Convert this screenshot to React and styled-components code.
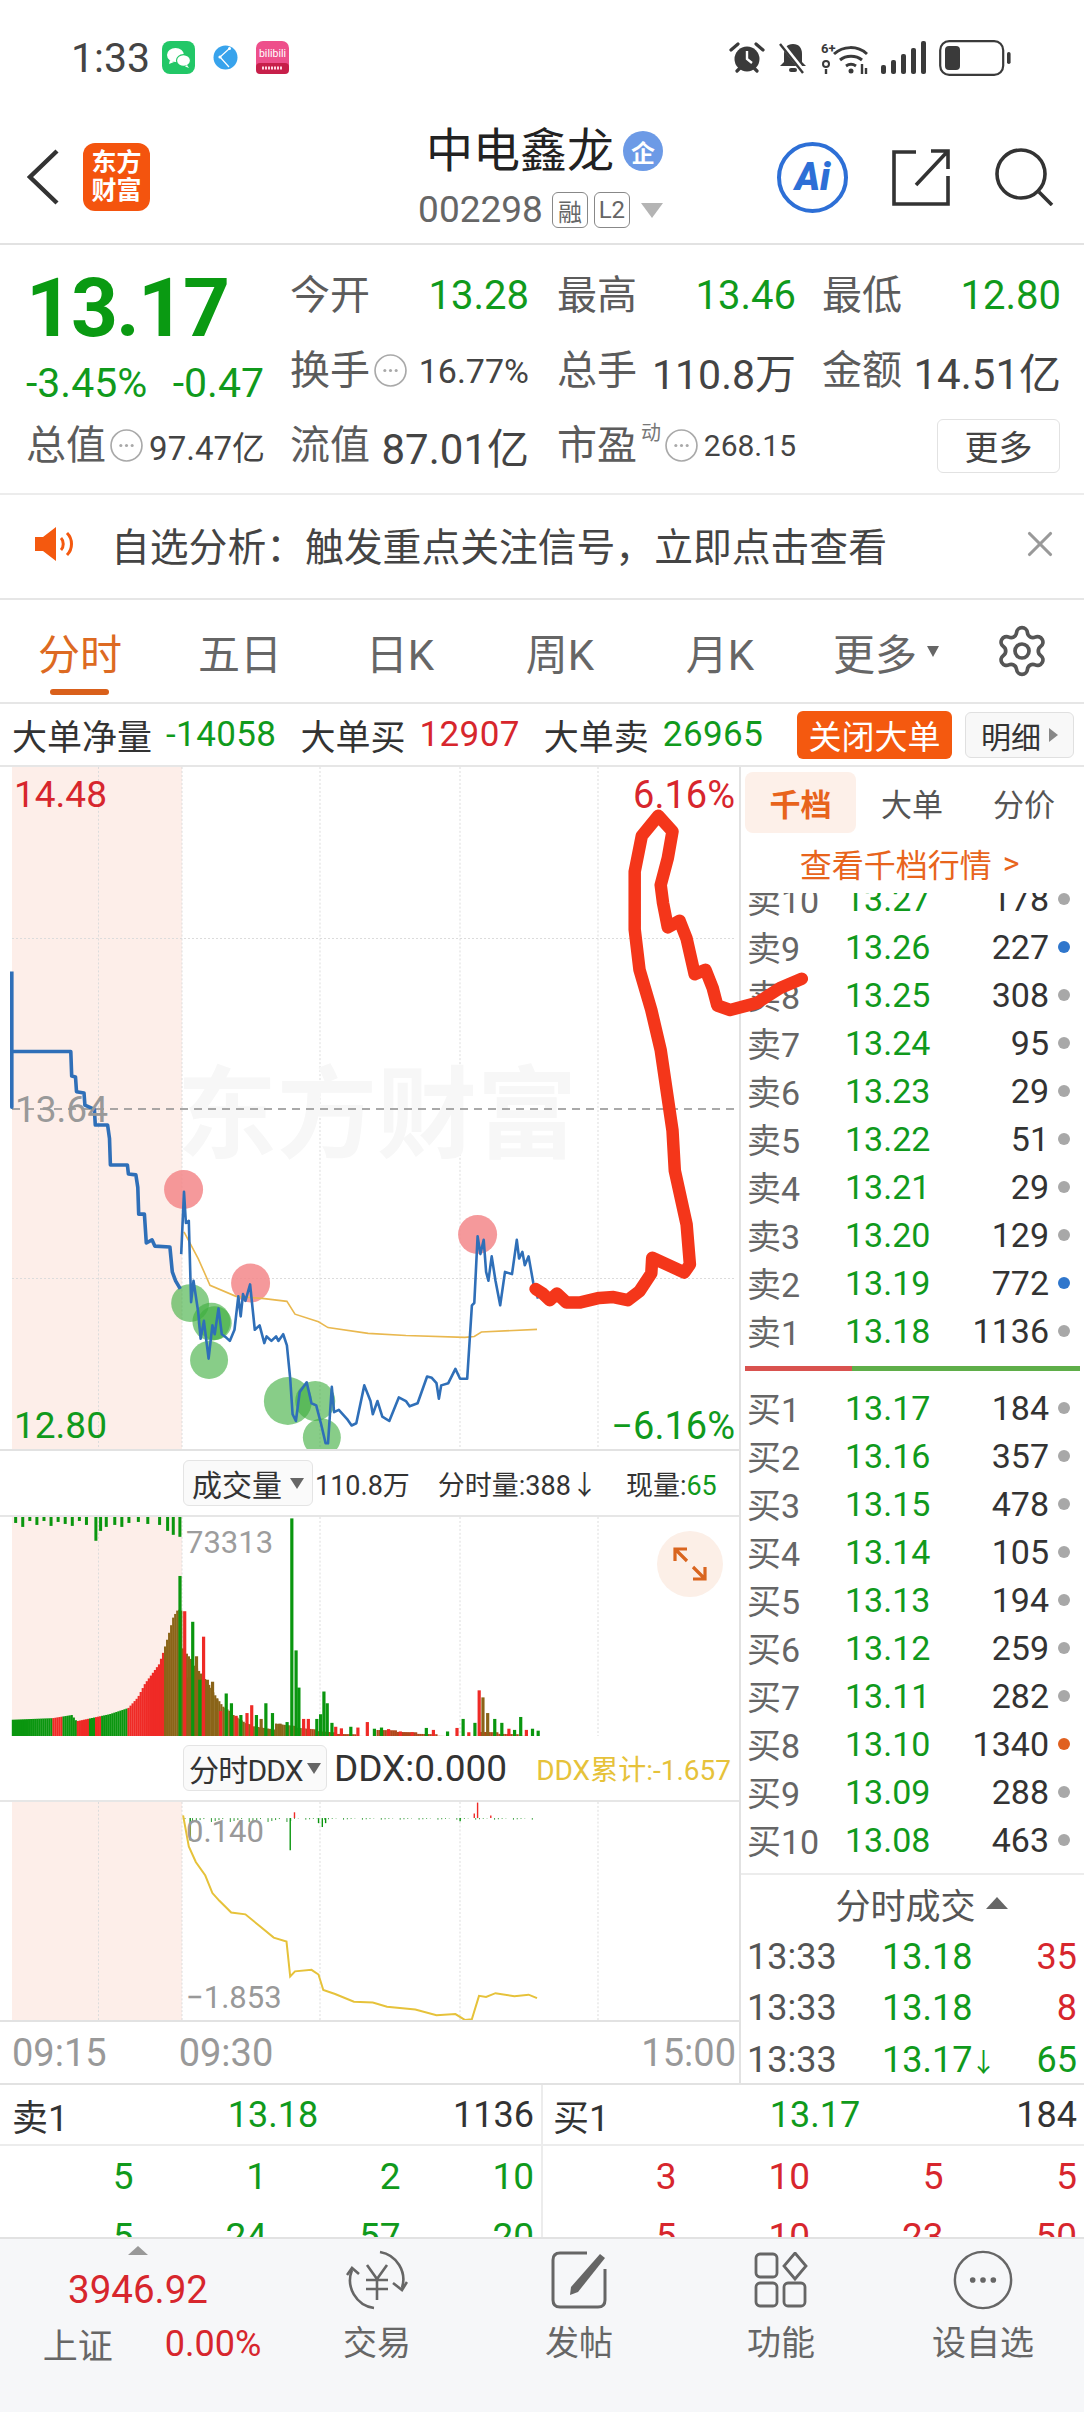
import styled, { createGlobalStyle } from "styled-components";
import { Settings, X } from "lucide-react";

const GREEN = "#109a1c";
const RED = "#d7262d";
const ORANGE = "#e8641c";
const GREY = "#5c5c5c";

// zoom crop coords -> chart coords
const mainX = (x) => x / 2.119;
const mainY = (y) => y / 2.24 - 7;
const lowX = (x) => x / 2.119;
const volY = (y) => y / 2.53 - 65;
const ddxY = (y) => y / 2.53 - 350;

const toPath = (pts, fx, fy) =>
    pts.map((p, i) => (i === 0 ? "M" : "L") + fx(p[0]).toFixed(1) + " " + fy(p[1]).toFixed(1)).join(" ");

const PRE_LINE = [[25,475],[25,780],[25,655],[150,655],[152,710],[160,712],[162,745],[178,748],[180,775],[200,785],[202,820],[228,820],[232,850],[234,910],[270,910],[272,930],[288,932],[292,960],[294,1020],[306,1020],[310,1085],[322,1078],[328,1092],[360,1094],[365,1150],[372,1170],[382,1188]];
const PRICE_LINE = [[384,1110],[390,970],[394,1040],[400,1035],[405,1218],[410,1170],[420,1240],[425,1300],[432,1260],[442,1345],[450,1270],[455,1290],[463,1232],[470,1290],[480,1298],[487,1305],[497,1280],[505,1205],[510,1250],[515,1200],[520,1215],[530,1178],[540,1280],[550,1270],[560,1310],[565,1295],[575,1305],[585,1295],[590,1305],[600,1290],[608,1315],[615,1390],[620,1470],[627,1485],[635,1420],[650,1398],[660,1445],[670,1450],[680,1490],[690,1535],[695,1535],[703,1408],[708,1465],[718,1460],[735,1480],[745,1495],[755,1490],[772,1405],[785,1440],[790,1470],[800,1440],[810,1475],[825,1485],[845,1432],[860,1440],[868,1452],[885,1445],[905,1385],[915,1388],[925,1400],[930,1435],[935,1405],[950,1400],[965,1368],[975,1390],[990,1390],[1000,1225],[1005,1220],[1012,1070],[1018,1110],[1025,1078],[1030,1150],[1035,1170],[1042,1115],[1050,1170],[1060,1225],[1070,1150],[1085,1155],[1095,1078],[1100,1120],[1107,1105],[1112,1135],[1120,1115],[1130,1175],[1140,1210]];
const AVG_LINE = [[390,1060],[420,1120],[445,1180],[500,1205],[560,1210],[608,1216],[625,1245],[675,1262],[695,1275],[780,1288],[860,1293],[985,1297],[1005,1295],[1020,1285],[1138,1279]];
const MARKER = [[1135,1185],[1150,1195],[1165,1210],[1180,1195],[1200,1215],[1230,1215],[1270,1205],[1300,1203],[1330,1210],[1355,1190],[1380,1150],[1382,1115],[1450,1148],[1462,1130],[1455,1040],[1430,920],[1425,830],[1400,650],[1380,560],[1355,470],[1345,380],[1345,250],[1360,170],[1395,125],[1425,160],[1415,220],[1400,280],[1405,320],[1415,375],[1440,360],[1455,400],[1472,480],[1495,470],[1510,510],[1520,550],[1547,560],[1604,544],[1653,511],[1699,490]];
const DDX_LINE = [[388,920],[400,1000],[415,1040],[435,1075],[450,1120],[465,1140],[490,1170],[520,1175],[550,1205],[580,1235],[607,1245],[615,1335],[625,1322],[660,1318],[675,1330],[685,1370],[710,1380],[750,1400],[790,1402],[820,1413],[880,1420],[925,1435],[965,1432],[985,1447],[1000,1445],[1015,1385],[1030,1388],[1050,1378],[1090,1386],[1120,1382],[1138,1391]];

const PINK_DOTS = [[389,965],[531,1175],[1012,1066]];
const GREEN_DOTS = [[403,1220,19],[448,1262,19],[455,1265,17],[443,1348,19],[610,1440,24],[668,1440,20],[682,1522,19]];

const RAMP = [[25,682],[110,678],[150,670],[160,686],[230,668],[270,652],[290,625],[305,590],[320,565],[335,540],[345,505],[355,465],[365,420],[375,400],[385,405]];
const RAMP_COLORS = [[110,"#0a960f"],[130,"#ef2a26"],[160,"#0a960f"],[185,"#ef2a26"],[200,"#0a960f"],[210,"#ef2a26"],[268,"#0a960f"],[345,"#ef2a26"],[400,"#8a6418"]];

const SPIKES = [[378,315,"g"],[388,405,"r"],[396,575,"b"],[405,432,"g"],[413,520,"b"],[420,580,"g"],[428,470,"r"],[436,580,"b"],[447,585,"b"],[456,630,"b"],[464,660,"r"],[476,615,"g"],[487,640,"g"],[497,672,"r"],[507,670,"g"],[520,665,"r"],[530,645,"r"],[540,670,"g"],[550,680,"b"],[560,640,"g"],[574,665,"g"],[590,692,"b"],[605,688,"g"],[615,168,"g"],[624,505,"g"],[630,600,"g"],[640,680,"r"],[650,680,"r"],[668,680,"g"],[676,668,"g"],[683,610,"g"],[690,640,"g"],[700,690,"g"],[708,700,"r"],[720,704,"r"],[740,700,"g"],[755,702,"r"],[775,688,"r"],[790,705,"g"],[805,702,"g"],[820,706,"r"],[845,712,"r"],[870,714,"r"],[900,703,"g"],[915,708,"r"],[945,712,"g"],[965,703,"r"],[978,680,"g"],[990,714,"r"],[1003,690,"g"],[1012,607,"r"],[1020,625,"b"],[1030,665,"b"],[1045,680,"g"],[1060,690,"g"],[1075,705,"r"],[1087,708,"g"],[1100,675,"g"],[1112,708,"r"],[1125,705,"g"],[1137,710,"g"]];
const BAR_COLOR = { g: "#0a960f", r: "#ef2a26", b: "#8a6418" };

const lerp = (pts, x) => {
    for (let i = 1; i < pts.length; i++) {
        if (x <= pts[i][0]) {
            const a = pts[i - 1];
            const b = pts[i];
            return a[1] + ((b[1] - a[1]) * (x - a[0])) / (b[0] - a[0]);
        }
    }
    return 725;
};

const rampColor = (x) => RAMP_COLORS.find((c) => x <= c[0])?.[1] ?? "#8a6418";

const rampBars = [];
for (let x = 25; x < 385; x += 4.3) rampBars.push([x, lerp(RAMP, x), rampColor(x)]);

// brown floor under the spikes right after the open
const FILL_TOP = [[385,500],[430,570],[470,640],[520,680],[600,695],[640,700],[700,706],[1140,716]];
const fillBars = [];
for (let x = 385; x < 1140; x += 4.3) fillBars.push([x, lerp(FILL_TOP, x) + (Math.round(x * 7) % 5) * 4]);

const TOP_FRINGE = [[30,6],[45,10],[60,4],[75,8],[90,4],[105,9],[120,5],[135,7],[150,9],[165,4],[180,8],[200,24],[210,14],[222,10],[240,8],[255,10],[270,6],[290,5],[310,7],[335,8],[352,14],[364,18],[378,20]];

const DDX_TICKS = [[403,985,"g"],[615,1010,"g"],[683,950,"g"],[675,940,"g"],[690,940,"g"],[1012,887,"r"],[1005,915,"r"],[624,912,"r"],[975,935,"g"],[1040,920,"r"]];
const ddxSmall = [];
for (let x = 392; x < 1136; x += 8) ddxSmall.push([x, 927 + (Math.round(x * 3) % 5) * (x < 620 ? 2.5 : 1)]);

const BID_ASK = [
    ["卖10","13.27","178","g"],["卖9","13.26","227","b"],["卖8","13.25","308","g"],["卖7","13.24","95","g"],["卖6","13.23","29","g"],
    ["卖5","13.22","51","g"],["卖4","13.21","29","g"],["卖3","13.20","129","g"],["卖2","13.19","772","b"],["卖1","13.18","1136","g"],
];
const BIDS = [
    ["买1","13.17","184","g"],["买2","13.16","357","g"],["买3","13.15","478","g"],["买4","13.14","105","g"],["买5","13.13","194","g"],
    ["买6","13.12","259","g"],["买7","13.11","282","g"],["买8","13.10","1340","o"],["买9","13.09","288","g"],["买10","13.08","463","g"],
];
const DOT_COLOR = { g: "#a8a8a8", b: "#2f76cc", o: "#e0601f" };
const TRADES = [["13:33","13.18","35",RED,false],["13:33","13.18","8",RED,false],["13:33","13.17","65",GREEN,true]];
const TABS = ["分时","五日","日K","周K","月K"];

const GlobalStyle = createGlobalStyle`
    html, body {
        margin: 0;
        padding: 0;
        background: #fff;
    }
    body {
        font-family: Roboto, "Noto Sans CJK SC", sans-serif;
        color: #333;
    }
    * {
        box-sizing: border-box;
    }
`;

const DotsIcon = ({ size = 33, color = "#a9a9a9", strokeWidth = 1.6 }) => (
    <svg width={size} height={size} viewBox="0 0 32 32" fill="none">
        <circle cx="16" cy="16" r="15" stroke={color} strokeWidth={strokeWidth} />
        <circle cx="10.5" cy="16" r="1.5" fill={color} />
        <circle cx="16" cy="16" r="1.5" fill={color} />
        <circle cx="21.5" cy="16" r="1.5" fill={color} />
    </svg>
);

const BackIcon = () => (
    <svg width="32" height="56" viewBox="0 0 32 56" fill="none" stroke="#333" strokeWidth="4.4">
        <path d="M30 2L3 28l27 26" />
    </svg>
);

const WeChatIcon = () => (
    <svg width="33" height="33" viewBox="0 0 33 33">
        <rect width="33" height="33" rx="8" fill="#22c767" />
        <ellipse cx="13.5" cy="14" rx="8.5" ry="7" fill="#fff" />
        <path d="M8 19l-1 4 5-2z" fill="#fff" />
        <ellipse cx="21.5" cy="19.5" rx="7" ry="5.8" fill="#fff" stroke="#22c767" strokeWidth="1.2" />
        <path d="M25 24l2 3-4-1.6z" fill="#fff" />
    </svg>
);

const GlobeIcon = () => (
    <svg width="25" height="25" viewBox="0 0 25 25">
        <circle cx="12.5" cy="12.5" r="12" fill="#38a3ec" />
        <path d="M17 3L7 12l9 10" stroke="#fff" strokeWidth="1.2" fill="none" />
        <circle cx="7" cy="12" r="1.6" fill="#fff" />
        <circle cx="16.5" cy="3.5" r="1.5" fill="#fff" />
    </svg>
);

const BiliIcon = () => (
    <svg width="33" height="33" viewBox="0 0 33 33">
        <rect width="33" height="33" rx="7" fill="#ee4f8b" />
        <rect y="22" width="33" height="11" rx="4" fill="#c71f4a" />
        <text x="16.5" y="16" textAnchor="middle" fontSize="10.5" fontFamily="Roboto" fill="#fff">bilibili</text>
        <path d="M6 27h21" stroke="#ffd6e3" strokeWidth="3" strokeDasharray="2 1" />
    </svg>
);

const AlarmIcon = () => (
    <svg width="36" height="33" viewBox="0 0 36 33">
        <circle cx="18" cy="18" r="12.5" fill="#3a3a3a" />
        <path d="M18 10v8l5 4" stroke="#fff" strokeWidth="2.4" fill="none" />
        <path d="M2 9l7-6M34 9l-7-6M8 30l3-3M28 30l-3-3" stroke="#3a3a3a" strokeWidth="3.2" strokeLinecap="round" />
    </svg>
);

const MuteIcon = () => (
    <svg width="30" height="33" viewBox="0 0 30 33">
        <path d="M15 3c6 0 9 4 9 10v8l4 4H2l4-4v-8c0-6 3-10 9-10z" fill="#3a3a3a" />
        <rect x="11" y="27" width="8" height="4" rx="2" fill="#3a3a3a" />
        <path d="M3 2l23 29" stroke="#fff" strokeWidth="4.5" />
        <path d="M2 3l23 29" stroke="#3a3a3a" strokeWidth="2.4" />
    </svg>
);

const WifiIcon = () => (
    <svg width="47" height="35" viewBox="0 0 47 35" fill="none">
        <text x="0" y="13" fontSize="13" fontFamily="Roboto" fontWeight="700" fill="#3a3a3a">6+</text>
        <path d="M13 14C22 6 36 5 46 14M19 20c6-5 16-5 22 0M25 26c3-2 7-2 10 0" stroke="#3a3a3a" strokeWidth="3" />
        <circle cx="30" cy="31" r="2.5" fill="#3a3a3a" />
        <circle cx="5" cy="24" r="3" stroke="#3a3a3a" strokeWidth="2" />
        <path d="M5 29v5M41 24v10M45 28v6" stroke="#3a3a3a" strokeWidth="2.4" />
    </svg>
);

const SignalIcon = () => (
    <svg width="45" height="33" viewBox="0 0 45 33" fill="#3a3a3a">
        <rect x="0" y="24" width="5" height="9" rx="2" />
        <rect x="10" y="19" width="5" height="14" rx="2" />
        <rect x="20" y="13" width="5" height="20" rx="2" />
        <rect x="30" y="7" width="5" height="26" rx="2" />
        <rect x="40" y="0" width="5" height="33" rx="2" />
    </svg>
);

const BatteryIcon = () => (
    <svg width="72" height="36" viewBox="0 0 72 36" fill="none">
        <rect x="1.2" y="1.2" width="63" height="33.6" rx="9" stroke="#3a3a3a" strokeWidth="2.2" />
        <rect x="6" y="6" width="15" height="24" rx="4" fill="#3a3a3a" />
        <rect x="68" y="12" width="3.6" height="12" rx="1.8" fill="#3a3a3a" />
    </svg>
);

const ShareIcon = () => (
    <svg width="58" height="57" viewBox="0 0 58 57" fill="none" stroke="#333" strokeWidth="3.6">
        <path d="M24 3H2v52h54V27" />
        <path d="M24 36L55 3M39 2h17v18" />
    </svg>
);

const SearchIcon = () => (
    <svg width="60" height="58" viewBox="0 0 60 58" fill="none" stroke="#333" strokeWidth="3.6">
        <circle cx="27" cy="26" r="24" />
        <path d="M45 44l13 13" />
    </svg>
);

const SpeakerIcon = () => (
    <svg width="42" height="36" viewBox="0 0 42 36">
        <path d="M0 11h8L21 1v34L8 25H0z" fill="#f4590f" />
        <path d="M26 12c3 3 3 9 0 12M32 7c6 6 6 16 0 22" stroke="#f4590f" strokeWidth="3" fill="none" />
    </svg>
);

const ExpandIcon = () => (
    <svg width="36" height="36" viewBox="0 0 36 36" fill="none" stroke="#d9651f" strokeWidth="3.2">
        <path d="M3 15V3h12M3 3l12 12M33 21v12H21M33 33L21 21" />
    </svg>
);

const TradeIcon = () => (
    <svg width="62" height="60" viewBox="0 0 62 60" fill="none" stroke="#666" strokeWidth="2.6">
        <path d="M34 2a28 28 0 0 1 22 36" />
        <path d="M47 33l9 7 5-8" />
        <path d="M28 58A28 28 0 0 1 6 20" />
        <path d="M1 25l5-7 7 6" />
        <path d="M21 15l10 14 10-14M20 30h22M20 39h22M31 29v21" />
    </svg>
);

const PostIcon = () => (
    <svg width="56" height="58" viewBox="0 0 56 58" fill="none" stroke="#666" strokeWidth="3">
        <path d="M36 2H9Q2 2 2 9v40q0 7 7 7h38q7 0 7-7V18" />
        <path d="M20 36L49 3l5 4-27 34-8 3z" fill="#666" stroke="none" />
    </svg>
);

const FuncIcon = () => (
    <svg width="54" height="56" viewBox="0 0 54 56" fill="none" stroke="#666" strokeWidth="2.8">
        <rect x="2" y="2" width="21" height="23" rx="4" />
        <rect x="2" y="31" width="21" height="23" rx="4" />
        <rect x="30" y="31" width="21" height="23" rx="4" />
        <path d="M41 1l11 13-11 13-11-13z" />
    </svg>
);

const App = () => {
    return (
        <Screen>
            <GlobalStyle />
            <StatusBar>
                <StatusLeft>
                    <Clock>1:33</Clock>
                    <WeChatIcon />
                    <GlobeIcon />
                    <BiliIcon />
                </StatusLeft>
                <StatusRight>
                    <AlarmIcon />
                    <MuteIcon />
                    <WifiIcon />
                    <SignalIcon />
                    <BatteryIcon />
                </StatusRight>
            </StatusBar>

            <Header>
                <HeaderLeft>
                    <BackIcon />
                    <Logo>东方<br />财富</Logo>
                </HeaderLeft>
                <TitleBlock>
                    <TitleRow>
                        <Title>中电鑫龙</Title>
                        <CorpBadge>企</CorpBadge>
                    </TitleRow>
                    <CodeRow>
                        <Code>002298</Code>
                        <CodeTag>融</CodeTag>
                        <CodeTag>L2</CodeTag>
                        <CodeCaret />
                    </CodeRow>
                </TitleBlock>
                <HeaderRight>
                    <AiBadge>Ai</AiBadge>
                    <ShareIcon />
                    <SearchIcon />
                </HeaderRight>
            </Header>

            <Quote>
                <PriceCell>
                    <BigPrice>13.17</BigPrice>
                    <ChangeRow>
                        <span>-3.45%</span>
                        <span>-0.47</span>
                    </ChangeRow>
                </PriceCell>
                <Metric><MetricLabel>今开</MetricLabel><MetricValue $color={GREEN}>13.28</MetricValue></Metric>
                <Metric><MetricLabel>最高</MetricLabel><MetricValue $color={GREEN}>13.46</MetricValue></Metric>
                <Metric><MetricLabel>最低</MetricLabel><MetricValue $color={GREEN}>12.80</MetricValue></Metric>
                <Metric>
                    <LabelGroup><MetricLabel>换手</MetricLabel><DotsIcon /></LabelGroup>
                    <MetricValue $size={34}>16.77%</MetricValue>
                </Metric>
                <Metric><MetricLabel>总手</MetricLabel><MetricValue $size={41}>110.8万</MetricValue></Metric>
                <Metric><MetricLabel>金额</MetricLabel><MetricValue $size={42}>14.51亿</MetricValue></Metric>
                <Metric>
                    <LabelGroup><MetricLabel>总值</MetricLabel><DotsIcon /></LabelGroup>
                    <MetricValue $size={33}>97.47亿</MetricValue>
                </Metric>
                <Metric><MetricLabel>流值</MetricLabel><MetricValue $size={42}>87.01亿</MetricValue></Metric>
                <Metric>
                    <LabelGroup>
                        <MetricLabel>市盈</MetricLabel>
                        <Super>动</Super>
                        <DotsIcon />
                    </LabelGroup>
                    <MetricValue $size={30}>268.15</MetricValue>
                </Metric>
                <MoreCell><MoreButton>更多</MoreButton></MoreCell>
            </Quote>

            <Notice>
                <SpeakerIcon />
                <NoticeText>自选分析：触发重点关注信号，立即点击查看</NoticeText>
                <X size={42} strokeWidth={1.8} color="#999" />
            </Notice>

            <TabBar>
                {TABS.map((tab, i) => (
                    <Tab key={tab} $active={i === 0}>{tab}</Tab>
                ))}
                <Tab $shift={12}>更多<TabCaret /></Tab>
                <GearCell><Settings size={56} strokeWidth={1.6} color="#555" /></GearCell>
            </TabBar>

            <OrderBar>
                <OrderGroup><OrderLabel>大单净量</OrderLabel><OrderValue $color={GREEN}>-14058</OrderValue></OrderGroup>
                <OrderGroup><OrderLabel>大单买</OrderLabel><OrderValue $color={RED}>12907</OrderValue></OrderGroup>
                <OrderGroup><OrderLabel>大单卖</OrderLabel><OrderValue $color={GREEN}>26965</OrderValue></OrderGroup>
                <CloseOrders>关闭大单</CloseOrders>
                <DetailButton>明细<DetailCaret /></DetailButton>
            </OrderBar>

            <MainRow>
                <LeftColumn>
                    <MainChart>
                        <ChartSvg viewBox="0 0 739 684" preserveAspectRatio="none">
                            <rect x="12" width="170" height="684" fill="#fdeee9" />
                            <path d="M98.5 0V684M182 0V684M320 0V684M460 0V684M598 0V684M12 172H735M12 513H735" stroke="#dcdcdc" strokeDasharray="2 2" />
                            <text x="177" y="384" fontSize="100" fontWeight="700" fill="#f7f7f7" fontFamily="Noto Sans CJK SC">东方财富</text>
                            <path d="M12 343H735" stroke="#8d8d8d" strokeDasharray="8 6" strokeWidth="1.4" />
                            {PINK_DOTS.map((d) => (
                                <circle key={d[0]} cx={mainX(d[0])} cy={mainY(d[1])} r="19.5" fill="#f3878a" fillOpacity="0.85" />
                            ))}
                            {GREEN_DOTS.map((d) => (
                                <circle key={d[0]} cx={mainX(d[0])} cy={mainY(d[1])} r={d[2]} fill="#3fae3f" fillOpacity="0.62" />
                            ))}
                            <path d={toPath(AVG_LINE, mainX, mainY)} stroke="#e9b84f" strokeWidth="1.6" fill="none" />
                            <path d={toPath(PRE_LINE, mainX, mainY)} stroke="#2f6fb8" strokeWidth="3.6" fill="none" strokeLinejoin="round" />
                            <path d={toPath(PRICE_LINE, mainX, mainY)} stroke="#2f6fb8" strokeWidth="2.6" fill="none" strokeLinejoin="round" />
                        </ChartSvg>
                        <ChartLabel $top={8} $left={14} $color={RED}>14.48</ChartLabel>
                        <ChartLabel $top={8} $right={4} $color={RED} $size={38}>6.16%</ChartLabel>
                        <ChartLabel $top={323} $left={15} $color="#999">13.64</ChartLabel>
                        <ChartLabel $bottom={3} $left={14} $color={GREEN}>12.80</ChartLabel>
                        <ChartLabel $bottom={3} $right={4} $color={GREEN} $size={38}>−6.16%</ChartLabel>
                    </MainChart>

                    <IndicatorBar>
                        <Selector>成交量<SelectorCaret /></Selector>
                        <IndicatorText>110.8万</IndicatorText>
                        <IndicatorText $gap={28}>分时量:388↓</IndicatorText>
                        <IndicatorText $gap={28}>现量:<Colored $color={GREEN}>65</Colored></IndicatorText>
                    </IndicatorBar>

                    <VolumeChart>
                        <ChartSvg viewBox="0 0 739 221" preserveAspectRatio="none">
                            <rect x="12" width="170" height="221" fill="#fdeee9" />
                            <path d="M98.5 0V221M182 0V221M320 0V221M460 0V221M598 0V221" stroke="#dcdcdc" strokeDasharray="2 2" />
                            {TOP_FRINGE.map((b) => (
                                <rect key={b[0]} x={lowX(b[0])} y="0" width="3" height={b[1]} fill="#0a960f" />
                            ))}
                            {rampBars.map((b) => (
                                <rect key={b[0]} x={lowX(b[0])} y={volY(b[1])} width="2.2" height={221 - volY(b[1])} fill={b[2]} />
                            ))}
                            {fillBars.map((b) => (
                                <rect key={b[0]} x={lowX(b[0])} y={volY(b[1])} width="2.2" height={Math.max(0, 221 - volY(b[1]))} fill={b[0] < 640 ? "#8a6418" : "#b0481c"} />
                            ))}
                            {SPIKES.map((b) => (
                                <rect key={b[0]} x={lowX(b[0])} y={volY(b[1])} width={3.2} height={221 - volY(b[1])} fill={BAR_COLOR[b[2]]} />
                            ))}
                        </ChartSvg>
                        <ChartLabel $top={6} $left={186} $color="#9d9d9d" $size={31}>73313</ChartLabel>
                        <ExpandButton><ExpandIcon /></ExpandButton>
                    </VolumeChart>

                    <IndicatorBar>
                        <Selector $tight>分时DDX<SelectorCaret /></Selector>
                        <IndicatorText $size={37} $gap={7}>DDX:0.000</IndicatorText>
                        <IndicatorText $gap={29} $color="#e6c23a" $size={28}>DDX累计:-1.657</IndicatorText>
                    </IndicatorBar>

                    <DdxChart>
                        <ChartSvg viewBox="0 0 739 222" preserveAspectRatio="none">
                            <rect x="12" width="170" height="222" fill="#fdeee9" />
                            <path d="M98.5 0V222M182 0V222M320 0V222M460 0V222M598 0V222" stroke="#dcdcdc" strokeDasharray="2 2" />
                            {ddxSmall.map((b) => (
                                <path key={b[0]} d={`M${lowX(b[0])} ${ddxY(927)}V${ddxY(b[1])}`} stroke="#2f9a35" strokeWidth="1" />
                            ))}
                            {DDX_TICKS.map((b) => (
                                <path key={b[0]} d={`M${lowX(b[0])} ${ddxY(927)}V${ddxY(b[1])}`} stroke={BAR_COLOR[b[2]]} strokeWidth="1.4" />
                            ))}
                            <path d={toPath(DDX_LINE, lowX, ddxY)} stroke="#e6c23a" strokeWidth="2" fill="none" />
                        </ChartSvg>
                        <ChartLabel $top={10} $left={186} $color="#999" $size={31}>0.140</ChartLabel>
                        <ChartLabel $bottom={2} $left={186} $color="#999" $size={31}>−1.853</ChartLabel>
                    </DdxChart>

                    <TimeAxis>
                        <TimeTick>09:15</TimeTick>
                        <TimeTick $gap={72}>09:30</TimeTick>
                        <TimeTick $push>15:00</TimeTick>
                    </TimeAxis>
                </LeftColumn>

                <BookPanel>
                    <BookTabs>
                        <BookTab $active>千档</BookTab>
                        <BookTab>大单</BookTab>
                        <BookTab>分价</BookTab>
                    </BookTabs>
                    <BookLink>查看千档行情<LinkArrow>&gt;</LinkArrow></BookLink>
                    <AskList>
                        {BID_ASK.map((row) => (
                            <DepthRow key={row[0]}>
                                <DepthLabel>{row[0]}</DepthLabel>
                                <DepthPrice>{row[1]}</DepthPrice>
                                <DepthQty>{row[2]}</DepthQty>
                                <DepthDot $color={DOT_COLOR[row[3]]} />
                            </DepthRow>
                        ))}
                    </AskList>
                    <RatioBar />
                    <BidList>
                        {BIDS.map((row) => (
                            <DepthRow key={row[0]}>
                                <DepthLabel>{row[0]}</DepthLabel>
                                <DepthPrice>{row[1]}</DepthPrice>
                                <DepthQty>{row[2]}</DepthQty>
                                <DepthDot $color={DOT_COLOR[row[3]]} />
                            </DepthRow>
                        ))}
                    </BidList>
                    <TradesHead>分时成交<TradesCaret /></TradesHead>
                    {TRADES.map((row, i) => (
                        <TradeRow key={i}>
                            <span>{row[0]}</span>
                            <TradePrice>{row[1]}{row[4] && <DownArrow>↓</DownArrow>}</TradePrice>
                            <TradeQty $color={row[3]}>{row[2]}</TradeQty>
                        </TradeRow>
                    ))}
                </BookPanel>
            </MainRow>

            <LevelTable>
                <LevelHalf $left>
                    <LevelHead $left><span>卖1</span><LevelPrice>13.18</LevelPrice><LevelQty>1136</LevelQty></LevelHead>
                    <LevelNums $color={GREEN}><span>5</span><span>1</span><span>2</span><span>10</span></LevelNums>
                    <LevelNums $color={GREEN}><span>5</span><span>24</span><span>57</span><span>20</span></LevelNums>
                </LevelHalf>
                <LevelHalf>
                    <LevelHead><span>买1</span><LevelPrice>13.17</LevelPrice><LevelQty>184</LevelQty></LevelHead>
                    <LevelNums $color={RED}><span>3</span><span>10</span><span>5</span><span>5</span></LevelNums>
                    <LevelNums $color={RED}><span>5</span><span>10</span><span>23</span><span>50</span></LevelNums>
                </LevelHalf>
            </LevelTable>

            <Footer>
                <IndexCell>
                    <IndexCaret />
                    <IndexValue>3946.92</IndexValue>
                    <IndexRow>
                        <IndexName>上证</IndexName>
                        <IndexChange>0.00%</IndexChange>
                    </IndexRow>
                </IndexCell>
                <FooterItem><IconSlot><TradeIcon /></IconSlot><FooterLabel>交易</FooterLabel></FooterItem>
                <FooterItem><IconSlot><PostIcon /></IconSlot><FooterLabel>发帖</FooterLabel></FooterItem>
                <FooterItem><IconSlot><FuncIcon /></IconSlot><FooterLabel>功能</FooterLabel></FooterItem>
                <FooterItem><IconSlot><DotsIcon size={60} color="#666" strokeWidth={1.3} /></IconSlot><FooterLabel>设自选</FooterLabel></FooterItem>
            </Footer>

            <MarkerLayer viewBox="0 0 1084 1317">
                <path d={toPath(MARKER, mainX, mainY)} stroke="#f4361a" strokeWidth="12.5" fill="none" strokeLinejoin="round" strokeLinecap="round" />
            </MarkerLayer>
        </Screen>
    );
};

const Screen = styled.div`
    position: relative;
    width: 1084px;
    height: 2412px;
    overflow: hidden;
    background: #fff;
`;

// status bar
const StatusBar = styled.div`
    height: 115px;
    display: flex;
    align-items: center;
    justify-content: space-between;
    padding: 0 73px 0 71px;
`;

const StatusLeft = styled.div`
    display: flex;
    align-items: center;
    gap: 18px;
`;

const StatusRight = styled.div`
    display: flex;
    align-items: center;
    gap: 13px;
`;

const Clock = styled.div`
    font-size: 41px;
    color: #444;
    margin-right: -6px;
`;

// header
const Header = styled.div`
    height: 130px;
    display: grid;
    grid-template-columns: 1fr auto 1fr;
    align-items: center;
    padding: 0 30px 4px 27px;
    border-bottom: 2px solid #e2e2e2;
`;

const HeaderLeft = styled.div`
    display: flex;
    align-items: center;
    gap: 24px;
`;

const Logo = styled.div`
    width: 67px;
    height: 68px;
    border-radius: 12px;
    background: #f4540e;
    color: #fff;
    font-size: 25px;
    font-weight: 700;
    line-height: 28px;
    text-align: center;
    padding-top: 6px;
`;

const TitleBlock = styled.div`
    display: flex;
    flex-direction: column;
    align-items: center;
    gap: 16px;
`;

const TitleRow = styled.div`
    display: flex;
    align-items: center;
    gap: 9px;
    margin-left: 8px;
`;

const Title = styled.div`
    font-size: 47px;
    line-height: 50px;
    color: #222;
`;

const CorpBadge = styled.div`
    width: 40px;
    height: 40px;
    border-radius: 50%;
    background: #6c9ae6;
    color: #fff;
    font-size: 24px;
    font-weight: 700;
    display: flex;
    align-items: center;
    justify-content: center;
`;

const CodeRow = styled.div`
    display: flex;
    align-items: center;
    gap: 6px;
`;

const Code = styled.div`
    font-size: 37px;
    line-height: 36px;
    color: #666;
    margin-right: 3px;
`;

const CodeTag = styled.div`
    height: 36px;
    min-width: 36px;
    border: 1.5px solid #888;
    border-radius: 6px;
    font-size: 24px;
    color: #666;
    padding: 0 3px;
    display: flex;
    align-items: center;
    justify-content: center;
`;

const CodeCaret = styled.div`
    width: 0;
    height: 0;
    margin-left: 5px;
    border-left: 11px solid transparent;
    border-right: 11px solid transparent;
    border-top: 15px solid #b4b4b4;
`;

const HeaderRight = styled.div`
    display: flex;
    align-items: center;
    justify-content: flex-end;
    gap: 44px;
`;

const AiBadge = styled.div`
    width: 71px;
    height: 71px;
    border-radius: 50%;
    border: 4px solid #2d6fd6;
    color: #2d6fd6;
    font-size: 38px;
    font-weight: 900;
    font-style: italic;
    display: flex;
    align-items: center;
    justify-content: center;
`;

// quote block
const Quote = styled.div`
    height: 250px;
    display: grid;
    grid-template-columns: 264px 267px 265px 238px;
    grid-auto-rows: 75px;
    padding: 13px 0 0 26px;
    border-bottom: 2px solid #ececec;
    align-items: center;
`;

const PriceCell = styled.div`
    grid-row: 1 / 3;
    height: 150px;
    display: flex;
    flex-direction: column;
`;

const BigPrice = styled.div`
    font-size: 82px;
    line-height: 100px;
    font-weight: 700;
    color: #0a9a12;
    letter-spacing: -2px;
`;

const ChangeRow = styled.div`
    display: flex;
    justify-content: space-between;
    width: 238px;
    font-size: 41px;
    line-height: 50px;
    color: ${GREEN};
`;

const Metric = styled.div`
    width: 239px;
    display: flex;
    align-items: center;
    justify-content: space-between;
`;

const LabelGroup = styled.div`
    display: flex;
    align-items: center;
    gap: 4px;
    position: relative;
`;

const MetricLabel = styled.div`
    font-size: 40px;
    line-height: 46px;
    color: ${GREY};
`;

const MetricValue = styled.div`
    font-size: ${(p) => p.$size || 40}px;
    color: ${(p) => p.$color || "#444"};
    white-space: nowrap;
`;

const Super = styled.div`
    font-size: 20px;
    line-height: 20px;
    color: #777;
    margin-bottom: 26px;
`;

const MoreCell = styled.div`
    width: 123px;
    margin-left: 115px;
`;

const MoreButton = styled.div`
    height: 54px;
    border: 1px solid #e2e2e2;
    border-radius: 6px;
    font-size: 34px;
    color: #444;
    display: flex;
    align-items: center;
    justify-content: center;
`;

// notice
const Notice = styled.div`
    height: 105px;
    display: flex;
    align-items: center;
    padding: 0 23px 5px 35px;
    border-bottom: 2px solid #e6e6e6;
`;

const NoticeText = styled.div`
    flex: 1;
    font-size: 38.8px;
    color: #444;
    margin-left: 34px;
`;

// tabs
const TabBar = styled.div`
    height: 104px;
    display: grid;
    grid-template-columns: repeat(6, 160px) 1fr;
    border-bottom: 2px solid #e6e6e6;
`;

const Tab = styled.div`
    position: relative;
    display: flex;
    align-items: center;
    justify-content: center;
    padding-left: ${(p) => p.$shift || 0}px;
    font-size: 42px;
    color: ${(p) => (p.$active ? "#dd6a22" : "#666")};

    ${(p) => p.$active && `
        &::after {
            content: "";
            position: absolute;
            left: 50px;
            bottom: 7px;
            width: 59px;
            height: 6px;
            border-radius: 3px;
            background: #d9601b;
        }
    `}
`;

const TabCaret = styled.span`
    width: 0;
    height: 0;
    margin-left: 10px;
    border-left: 6px solid transparent;
    border-right: 6px solid transparent;
    border-top: 11px solid #666;
`;

const GearCell = styled.div`
    display: flex;
    align-items: center;
    justify-content: center;
`;

// big order strip
const OrderBar = styled.div`
    height: 63px;
    display: flex;
    align-items: center;
    gap: 24px;
    padding: 0 10px 0 12px;
    border-bottom: 2px solid #e6e6e6;
`;

const OrderGroup = styled.div`
    display: flex;
    align-items: center;
    gap: 14px;
`;

const OrderLabel = styled.div`
    font-size: 35px;
    color: #333;
`;

const OrderValue = styled.div`
    font-size: 35px;
    letter-spacing: 0.4px;
    color: ${(p) => p.$color};
`;

const CloseOrders = styled.div`
    width: 155px;
    height: 48px;
    margin-left: auto;
    border-radius: 6px;
    background: #f4590f;
    color: #fff;
    font-size: 33px;
    display: flex;
    align-items: center;
    justify-content: center;
`;

const DetailButton = styled.div`
    width: 109px;
    height: 46px;
    margin-left: -11px;
    border: 1px solid #e0e0e0;
    border-radius: 6px;
    background: #f8f8f8;
    font-size: 30px;
    color: #333;
    display: flex;
    align-items: center;
    justify-content: center;
    gap: 8px;
`;

const DetailCaret = styled.span`
    width: 0;
    height: 0;
    border-top: 7px solid transparent;
    border-bottom: 7px solid transparent;
    border-left: 9px solid #888;
`;

// main charts
const MainRow = styled.div`
    height: 1318px;
    display: flex;
    border-bottom: 2px solid #e2e2e2;
`;

const LeftColumn = styled.div`
    width: 739px;
    flex: none;
    display: flex;
    flex-direction: column;
`;

const ChartBase = styled.div`
    position: relative;
    flex: none;
    overflow: hidden;
`;

const MainChart = styled(ChartBase)`
    height: 684px;
    border-bottom: 2px solid #e2e2e2;
`;

const VolumeChart = styled(ChartBase)`
    height: 221px;
    border-top: 2px solid #e6e6e6;
`;

const DdxChart = styled(ChartBase)`
    height: 222px;
    border-top: 2px solid #e6e6e6;
    border-bottom: 2px solid #e2e2e2;
`;

const ChartSvg = styled.svg`
    position: absolute;
    top: 0;
    left: 0;
    width: 739px;
    height: 100%;
`;

const ChartLabel = styled.div`
    position: absolute;
    top: ${(p) => (p.$top !== undefined ? p.$top + "px" : "auto")};
    bottom: ${(p) => (p.$bottom !== undefined ? p.$bottom + "px" : "auto")};
    left: ${(p) => (p.$left !== undefined ? p.$left + "px" : "auto")};
    right: ${(p) => (p.$right !== undefined ? p.$right + "px" : "auto")};
    font-size: ${(p) => p.$size || 37}px;
    line-height: 40px;
    color: ${(p) => p.$color};
`;

const ExpandButton = styled.div`
    position: absolute;
    top: 14px;
    left: 657px;
    width: 66px;
    height: 66px;
    border-radius: 50%;
    background: #fcefe7;
    display: flex;
    align-items: center;
    justify-content: center;
`;

const IndicatorBar = styled.div`
    height: 64px;
    flex: none;
    display: flex;
    align-items: center;
    padding-left: 183px;
    white-space: nowrap;
`;

const Selector = styled.div`
    height: 46px;
    padding: 0 ${(p) => (p.$tight ? 5 : 8)}px;
    border: 1px solid #e4e4e4;
    border-radius: 6px;
    background: #fafafa;
    font-size: 30px;
    letter-spacing: ${(p) => (p.$tight ? "-0.8px" : "0")};
    color: #333;
    display: flex;
    align-items: center;
    gap: ${(p) => (p.$tight ? 4 : 8)}px;
`;

const SelectorCaret = styled.span`
    width: 0;
    height: 0;
    border-left: 7px solid transparent;
    border-right: 7px solid transparent;
    border-top: 11px solid #666;
`;

const IndicatorText = styled.div`
    margin-left: ${(p) => p.$gap ?? 2}px;
    font-size: ${(p) => p.$size || 27}px;
    color: ${(p) => p.$color || "#333"};
`;

const Colored = styled.span`
    color: ${(p) => p.$color};
`;

const TimeAxis = styled.div`
    flex: 1;
    display: flex;
    align-items: center;
    padding: 0 3px 0 12px;
`;

const TimeTick = styled.div`
    font-size: 38px;
    color: #999;
    margin-left: ${(p) => (p.$push ? "auto" : (p.$gap || 0) + "px")};
`;

// order book
const BookPanel = styled.div`
    flex: 1;
    display: flex;
    flex-direction: column;
    border-left: 2px solid #e2e2e2;
    overflow: hidden;
`;

const BookTabs = styled.div`
    height: 66px;
    flex: none;
    display: grid;
    grid-template-columns: 111px 1fr 1fr;
    padding: 5px 4px 0 4px;
`;

const BookTab = styled.div`
    border-radius: 8px;
    background: ${(p) => (p.$active ? "#fdf0e9" : "transparent")};
    color: ${(p) => (p.$active ? ORANGE : "#555")};
    font-weight: ${(p) => (p.$active ? 700 : 400)};
    font-size: 31px;
    display: flex;
    align-items: center;
    justify-content: center;
`;

const BookLink = styled.div`
    height: 60px;
    flex: none;
    font-size: 32px;
    color: ${ORANGE};
    display: flex;
    align-items: center;
    justify-content: center;
    margin-right: 6px;
`;

const LinkArrow = styled.span`
    margin-left: 11px;
`;

const AskList = styled.div`
    height: 461px;
    flex: none;
    overflow: hidden;
    display: flex;
    flex-direction: column;
    justify-content: flex-end;
`;

const DepthRow = styled.div`
    height: 48px;
    flex: none;
    display: grid;
    grid-template-columns: 98px 88px 1fr 30px;
    align-items: center;
    padding: 0 5px 0 6px;
    font-size: 34px;
`;

const DepthLabel = styled.div`
    color: #666;
    white-space: nowrap;
`;

const DepthPrice = styled.div`
    color: ${GREEN};
`;

const DepthQty = styled.div`
    text-align: right;
    color: #333;
`;

const DepthDot = styled.div`
    width: 12px;
    height: 12px;
    border-radius: 50%;
    justify-self: center;
    background: ${(p) => p.$color};
`;

const RatioBar = styled.div`
    height: 5px;
    flex: none;
    margin: 12px 4px 12px;
    background: linear-gradient(90deg, #d9524f 0 107px, #5fae49 107px);
`;

const BidList = styled.div`
    flex: none;
    display: flex;
    flex-direction: column;
    padding-bottom: 10px;
    border-bottom: 2px solid #ececec;
`;

const TradesHead = styled.div`
    height: 56px;
    flex: none;
    font-size: 35px;
    color: #555;
    display: flex;
    align-items: center;
    justify-content: center;
    gap: 8px;
    margin-left: 18px;
`;

const TradesCaret = styled.span`
    width: 0;
    height: 0;
    margin-left: 2px;
    border-left: 11px solid transparent;
    border-right: 11px solid transparent;
    border-bottom: 12px solid #666;
`;

const TradeRow = styled.div`
    height: 51.5px;
    flex: none;
    display: grid;
    grid-template-columns: 135px 110px 1fr;
    align-items: center;
    padding: 0 7px 0 6px;
    font-size: 36px;
    color: #555;
`;

const TradePrice = styled.div`
    color: ${GREEN};
    white-space: nowrap;
`;

const DownArrow = styled.span`
    font-size: 26px;
    margin-left: -2px;
`;

const TradeQty = styled.div`
    text-align: right;
    color: ${(p) => p.$color};
`;

// level table
const LevelTable = styled.div`
    height: 152px;
    display: grid;
    grid-template-columns: 543px 1fr;
    overflow: hidden;
`;

const LevelHalf = styled.div`
    display: flex;
    flex-direction: column;
    border-right: ${(p) => (p.$left ? "2px solid #ececec" : "none")};
`;

const LevelHead = styled.div`
    height: 61px;
    flex: none;
    display: grid;
    grid-template-columns: 1fr auto 1fr;
    align-items: center;
    padding: ${(p) => (p.$left ? "0 7px 0 12px" : "0 7px 0 10px")};
    border-bottom: 2px solid #ececec;
    font-size: 36px;
    color: #333;
`;

const LevelPrice = styled.div`
    color: ${GREEN};
`;

const LevelQty = styled.div`
    text-align: right;
`;

const LevelNums = styled.div`
    height: 60px;
    flex: none;
    display: grid;
    grid-template-columns: repeat(4, 1fr);
    align-items: center;
    text-align: right;
    padding-right: 7px;
    font-size: 37px;
    color: ${(p) => p.$color};
`;

// footer
const Footer = styled.div`
    height: 176px;
    display: grid;
    grid-template-columns: 276px repeat(4, 202px);
    background: #f6f7f9;
    border-top: 2px solid #e2e2e2;
`;

const IndexCell = styled.div`
    display: flex;
    flex-direction: column;
    align-items: center;
    padding-top: 7px;
`;

const IndexCaret = styled.div`
    width: 0;
    height: 0;
    border-left: 10px solid transparent;
    border-right: 10px solid transparent;
    border-bottom: 9px solid #999;
`;

const IndexValue = styled.div`
    font-size: 38.5px;
    line-height: 44px;
    margin-top: 13px;
    color: ${RED};
`;

const IndexRow = styled.div`
    display: flex;
    align-items: center;
    gap: 52px;
    margin-top: 6px;
    margin-left: 28px;
`;

const IndexName = styled.div`
    font-size: 35px;
    color: #666;
`;

const IndexChange = styled.div`
    font-size: 36px;
    color: ${RED};
`;

const FooterItem = styled.div`
    display: flex;
    flex-direction: column;
    align-items: center;
    padding-top: 10px;
`;

const IconSlot = styled.div`
    height: 62px;
    display: flex;
    align-items: center;
    justify-content: center;
`;

const FooterLabel = styled.div`
    margin-top: 12px;
    font-size: 34px;
    line-height: 40px;
    color: #666;
`;

// hand drawn stroke on top of the chart and the book
const MarkerLayer = styled.svg`
    position: absolute;
    top: 767px;
    left: 0;
    width: 1084px;
    height: 1317px;
    pointer-events: none;
`;

export default App;
